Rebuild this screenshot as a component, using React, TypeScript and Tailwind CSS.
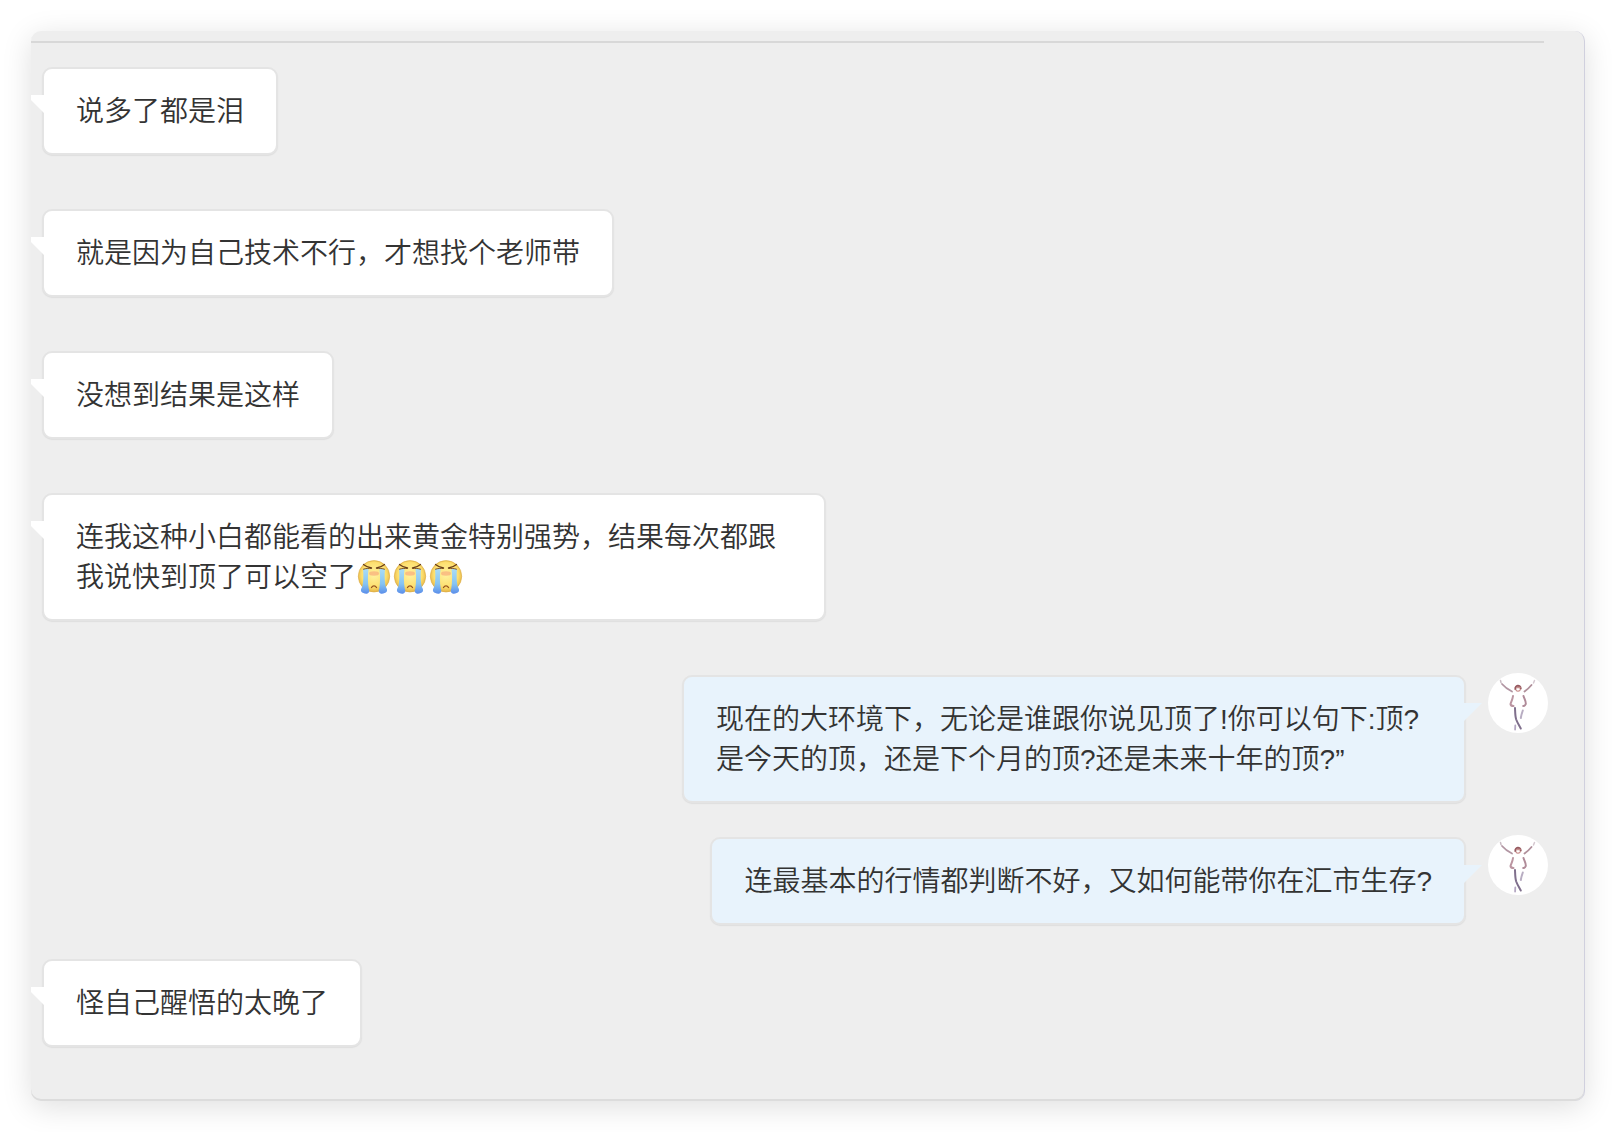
import React from "react";
import clsx from "clsx";

type Message = {
  id: number;
  from: "customer" | "me";
  text: string;
  cries?: number;
};

const messages: Message[] = [
  { id: 1, from: "customer", text: "说多了都是泪" },
  { id: 2, from: "customer", text: "就是因为自己技术不行，才想找个老师带" },
  { id: 3, from: "customer", text: "没想到结果是这样" },
  {
    id: 4,
    from: "customer",
    text: "连我这种小白都能看的出来黄金特别强势，结果每次都跟我说快到顶了可以空了",
    cries: 3,
  },
  {
    id: 5,
    from: "me",
    text: "现在的大环境下，无论是谁跟你说见顶了!你可以句下:顶?是今天的顶，还是下个月的顶?还是未来十年的顶?”",
  },
  { id: 6, from: "me", text: "连最基本的行情都判断不好，又如何能带你在汇市生存?" },
  { id: 7, from: "customer", text: "怪自己醒悟的太晚了" },
];

const CryFace = () => (
  <svg viewBox="0 0 36 36" className="mb-0.5 inline-block size-9 align-bottom" role="img" aria-label="大哭">
    <defs>
      <radialGradient id="face" cx="0.5" cy="0.45" r="0.55">
        <stop offset="0" stopColor="#fff2a0" />
        <stop offset="0.7" stopColor="#fde070" />
        <stop offset="1" stopColor="#e6b544" />
      </radialGradient>
      <linearGradient id="tear" x1="0" y1="0" x2="0" y2="1">
        <stop offset="0" stopColor="#a9dcf5" />
        <stop offset="0.6" stopColor="#86c4f2" />
        <stop offset="1" stopColor="#5b8eea" />
      </linearGradient>
    </defs>
    <circle cx="18" cy="16.3" r="15.7" fill="url(#face)" stroke="#d9a63c" strokeWidth="0.6" />
    <ellipse cx="18" cy="13.5" rx="5" ry="2.2" fill="#f8b07c" opacity="0.75" />
    <path d="M7 9h5.500c-.8 6-.8 13 .2 19.500 1.200 2 .6 4.500-1.200 5-2 .6-5-.3-6.300-2-.8-1.500.2-3.500 1.200-5C7.500 21 7.600 15 7 9z" fill="url(#tear)" />
    <path d="M29 9h-5.500c.8 6 .8 13-.2 19.500-1.200 2-.6 4.500 1.200 5 2 .6 5-.3 6.300-2 .8-1.500-.2-3.500-1.200-5C28.500 21 28.400 15 29 9z" fill="url(#tear)" />
    <g fill="none" stroke="#6b401b" strokeLinecap="round">
      <path d="M7.500 4.500c2 1.700 5 2.800 8 3.500M28.500 4.500c-2 1.700-5 2.800-8 3.500" strokeWidth="1.3" />
      <path d="M7.500 9.200c2.500-.8 5-.9 7.500-.8M28.500 9.200c-2.500-.8-5-.9-7.500-.8" strokeWidth="0.9" />
      <path d="M15.500 27.500c1.300-2.300 3.700-2.300 5 0" stroke="#96501c" strokeWidth="1.3" />
    </g>
  </svg>
);

const Avatar = () => (
  <svg viewBox="0 0 60 60" className="-mt-0.5 size-15 shrink-0 rounded-full bg-white" aria-hidden="true">
    <g fill="none" strokeLinecap="round" strokeLinejoin="round">
      <path d="M12.500 7.500l.5 2" stroke="#c9bcc4" strokeWidth="1.5" />
      <path d="M14 11c3 3.500 6 5.500 10 7.500" stroke="#b296a3" strokeWidth="1.8" />
      <path d="M46.500 7.500l-1 2.500" stroke="#d5c8d0" strokeWidth="1.5" />
      <path d="M43.500 12c-2 2.500-4 4.300-7 6.500" stroke="#b0909b" strokeWidth="1.8" />
      <path d="M27.400 16c-.6-3.700 5-4.500 5.300-.5" stroke="#95585f" strokeWidth="2" />
      <path d="M28 17c1 1.700 3.500 1.700 4.400-.5M29 14.500h3" stroke="#c98f8d" strokeWidth="1.3" />
      <path d="M25 23c-.3 3-1.500 5-2.500 8 .2 1.500 1.500 2 3 2" stroke="#bb95a1" strokeWidth="2" />
      <path d="M35.500 23c.8 3 2.500 5 2.300 8-.5 1.500-1.500 2-2.600 2" stroke="#b08b99" strokeWidth="2" />
      <path d="M27 35c.2 4 .1 8 1.200 11.500 1.300 3.500 3 6 4.600 9" stroke="#7f6f8c" strokeWidth="2" />
      <path d="M34.800 37.500c-.9 2.500-1.600 5-2 7.500" stroke="#b8adc2" strokeWidth="2" />
      <path d="M27.300 52.500l-.2 4" stroke="#b4a7c2" strokeWidth="1.8" />
    </g>
  </svg>
);

const Bubble = ({ message }: { message: Message }) => {
  const mine = message.from === "me";
  return (
    <div
      className={clsx(
        "relative max-w-[784px] rounded-[10px] border-2 border-[#e4e4e4] px-8 pt-[23px] pb-[21px] shadow-[0_1px_1px_#dedede]",
        mine ? "bg-[#e8f3fc]" : "bg-white"
      )}
    >
      <svg
        viewBox="0 0 18 18"
        className={clsx("absolute top-[26px] size-[18px]", mine ? "left-full" : "right-full -scale-x-100")}
        aria-hidden="true"
      >
        <path d="M0 0h18L0 18z" fill={mine ? "#e8f3fc" : "#ffffff"} />
      </svg>
      <p className="text-[28px] leading-10 font-[350]">
        {message.text}
        {Array.from({ length: message.cries ?? 0 }, (_, i) => (
          <CryFace key={i} />
        ))}
      </p>
    </div>
  );
};

const MessageRow = ({ message }: { message: Message }) => {
  if (message.from === "me") {
    return (
      <li className="mb-[34px] flex items-start justify-end gap-[22px] pr-9">
        <Bubble message={message} />
        <Avatar />
      </li>
    );
  }
  return (
    <li className="mb-[54px] flex items-start pl-[11px]">
      <Bubble message={message} />
    </li>
  );
};

export default function App() {
  return (
    <main className="bg-white p-[31px] font-['Liberation_Sans','Noto_Sans_CJK_SC',sans-serif] text-[#333]">
      <section className="overflow-hidden rounded-[10px] border-r border-r-[#d0d0de] bg-[#eee] pt-2.5 shadow-[0_6px_30px_rgba(0,0,0,0.13),inset_0_-2px_0_#dcdcdc]">
        <hr className="mr-10 border-t-2 border-[#d8d8d8]" />
        <ul className="pt-6">
          {messages.map((message) => (
            <MessageRow key={message.id} message={message} />
          ))}
        </ul>
      </section>
    </main>
  );
}
